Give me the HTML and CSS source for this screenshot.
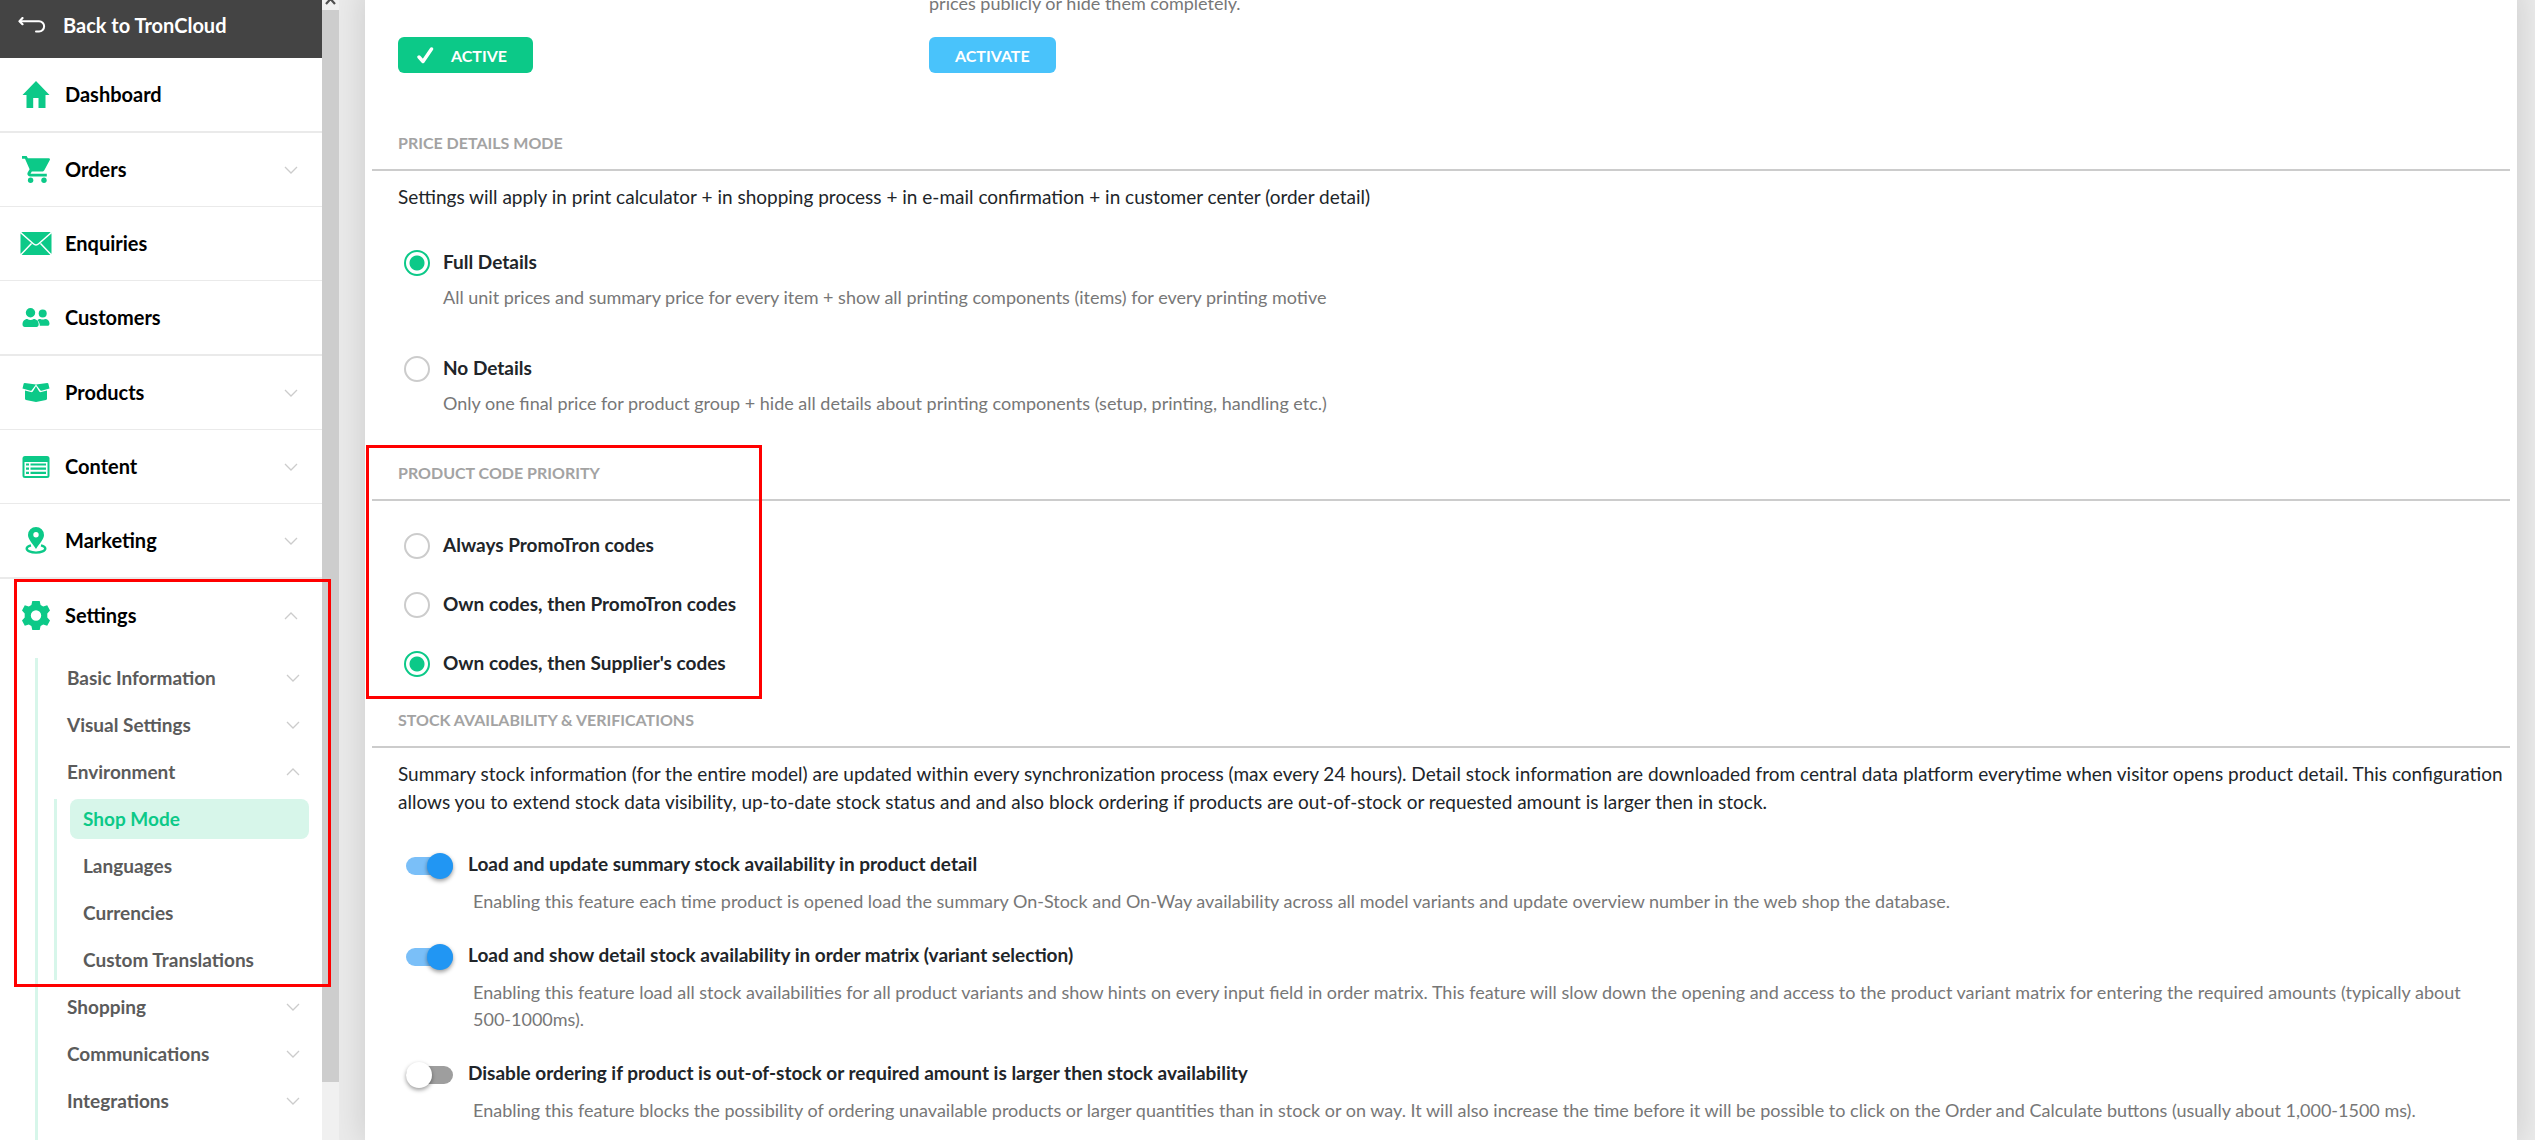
FILE: index.html
```html
<!DOCTYPE html>
<html lang="en">
<head>
<meta charset="utf-8">
<title>Shop Mode</title>
<link rel="stylesheet" href="styles.css">
</head>
<body>
<svg class="defs" aria-hidden="true">
  <symbol id="down" viewBox="0 0 14 8"><path d="M1 1l6 6 6-6" fill="none" stroke="#ccc" stroke-width="1.3"/></symbol>
  <symbol id="up" viewBox="0 0 14 8"><path d="M1 7l6-6 6 6" fill="none" stroke="#ccc" stroke-width="1.3"/></symbol>
</svg>
<div class="layout">
  <aside class="side">
    <nav class="menu">
      <a class="back" href="#">
        <svg width="28" height="16" viewBox="0 0 28 16" fill="none" stroke="#fff" stroke-width="2" stroke-linecap="round" stroke-linejoin="round"><path d="M2 4.2h19a5 5 0 0 1 0 10.300h-3"/><path d="M4.500 1L1.500 4.200l3 3" stroke-width="2.200"/></svg>
        Back to TronCloud
      </a>
      <a class="item thick" href="#"><svg class="ico" width="27" height="27" viewBox="0 0 27 27"><path d="M13.500 0L27 14h-4v13h-7V17h-5.300v10H4V14H0z"/></svg><span>Dashboard</span></a>
      <a class="item" href="#"><svg class="ico" width="28" height="27" viewBox="0 0 28 27"><path d="M0 0h4.600l1.300 2.200h20.900c1 0 1.500 1 1 1.800l-5.500 10.200c-.5.900-1.300 1.400-2.300 1.400H9.800L8.500 17.800h16.300v2.600H8c-2 0-3.200-2-2.300-3.800l1.900-3.300L3 2.800H0z"/><circle cx="8.600" cy="24.300" r="2.700"/><circle cx="22" cy="24.300" r="2.700"/></svg><span>Orders</span><svg class="chev"><use href="#down"/></svg></a>
      <a class="item" href="#"><svg class="ico" width="31" height="23" viewBox="0 0 31 23"><rect width="31" height="23" rx="2"/><path d="M0 .5l12.800 11.300q2.700 2.400 5.400 0L31 .5M0 23l11-11.500M31 23L20 11.500" fill="none" stroke="#fff" stroke-width="1.500"/></svg><span>Enquiries</span></a>
      <a class="item thick" href="#"><svg class="ico" width="27" height="19" viewBox="0 0 27 19"><circle cx="8" cy="4.700" r="4.700"/><circle cx="20.200" cy="5.500" r="4"/><path d="M0 16.500c0-3.200 2-5.500 4.800-5.500 1 .6 2 .9 3.200.9s2.200-.3 3.200-.9c2.800 0 5 2.300 5 5.500 0 1.500-1 2.500-2.200 2.500H2.200C1 19 0 18 0 16.500z"/><path d="M14.800 12.300c.8-.9 1.800-1.300 3-1.300 1.600.7 3.200.7 4.800 0 2.500 0 4.400 2 4.400 4.500 0 1.500-.9 2.300-2 2.300h-7.700c.2-2.200-.8-4.200-2.500-5.500z"/></svg><span>Customers</span></a>
      <a class="item" href="#"><svg class="ico" width="27" height="19" viewBox="0 0 27 19"><path d="M2.200 0l11.300 1.400L24.800 0c.5 0 .8.200 1 .6l1.200 4.900-8 2.300c-.4.100-.8 0-1-.4L13.500 1.600 9 7.400c-.2.400-.6.500-1 .4L0 5.500 1.200.6c.2-.4.500-.6 1-.6z"/><path d="M2.500 7.400l5.800 1.700c.8.200 1.500 0 2-.7l3.200-5.200 3.200 5.200c.5.700 1.200.9 2 .7l5.800-1.700v8.400c0 .6-.4 1-1 1.200L13.500 19 3.500 17c-.6-.2-1-.6-1-1.200z"/></svg><span>Products</span><svg class="chev"><use href="#down"/></svg></a>
      <a class="item" href="#"><svg class="ico" width="27" height="22" viewBox="0 0 27 22"><rect width="27" height="22" rx="2.500"/><path d="M2 6h23v14H2z" fill="#fff"/><path d="M3.500 8.500h3M3.500 12.700h3M3.500 16.900h3M8 8.500h15.500M8 12.700h15.500M8 16.900h15.500" stroke="#0cc988" stroke-width="2.200"/></svg><span>Content</span><svg class="chev"><use href="#down"/></svg></a>
      <a class="item thick" href="#"><svg class="ico" width="21" height="27" viewBox="0 0 21 27"><path fill-rule="evenodd" d="M10.500 0a8 8 0 0 1 8 8c0 4-4 8-8 14-4-6-8-10-8-14a8 8 0 0 1 8-8zm0 5a2.700 2.700 0 1 0 0 5.400 2.700 2.700 0 0 0 0-5.400z"/><path d="M5.500 18.300c-2.500.6-4.300 1.700-4.300 3.200 0 2.400 4 4.100 9.300 4.100s9.300-1.700 9.300-4.100c0-1.500-1.800-2.600-4.300-3.200" fill="none" stroke="#0cc988" stroke-width="2.400"/></svg><span>Marketing</span><svg class="chev"><use href="#down"/></svg></a>
      <a class="item last" href="#"><svg class="ico" width="28" height="29" viewBox="0 0 28 29"><path fill-rule="evenodd" d="M10.300 0h7.400l.9 4 2.600 1.500 4-1.300 2.800 5.200-2.700 3v4.200l2.700 3-2.800 5.200-4-1.300-2.600 1.500-.9 4h-7.400l-.9-4-2.600-1.500-4 1.300L0 19.600l2.700-3v-4.200L0 9.400l2.800-5.200 4 1.300L9.400 4zM14 9.300a5.200 5.200 0 1 0 0 10.400 5.200 5.200 0 0 0 0-10.400z"/></svg><span>Settings</span><svg class="chev"><use href="#up"/></svg></a>
      <div class="sub">
        <a class="subitem" href="#"><span>Basic Information</span><svg class="chev"><use href="#down"/></svg></a>
        <a class="subitem" href="#"><span>Visual Settings</span><svg class="chev"><use href="#down"/></svg></a>
        <a class="subitem" href="#"><span>Environment</span><svg class="chev"><use href="#up"/></svg></a>
        <div class="nested">
          <a class="leaf active" href="#">Shop Mode</a>
          <a class="leaf" href="#">Languages</a>
          <a class="leaf" href="#">Currencies</a>
          <a class="leaf" href="#">Custom Translations</a>
        </div>
        <a class="subitem" href="#"><span>Shopping</span><svg class="chev"><use href="#down"/></svg></a>
        <a class="subitem" href="#"><span>Communications</span><svg class="chev"><use href="#down"/></svg></a>
        <a class="subitem" href="#"><span>Integrations</span><svg class="chev"><use href="#down"/></svg></a>
      </div>
    </nav>
    <div class="scroll">
      <svg width="17" height="10" viewBox="0 0 17 10"><path d="M4 4l4.500-5L13 4" fill="none" stroke="#505050" stroke-width="2.200"/></svg>
      <div class="thumb"></div>
    </div>
    <div class="mark mark-menu"></div>
  </aside>

  <main class="page">
    <div class="card">
      <div class="modes">
        <div class="mode">
          <button class="btn green" type="button"><svg width="17" height="17" viewBox="0 0 17 17"><path d="M2 10l4 4.500L14.500 2" fill="none" stroke="#fff" stroke-width="3.400" stroke-linecap="round" stroke-linejoin="round"/></svg>ACTIVE</button>
        </div>
        <div class="mode">
          <p class="desc">prices publicly or hide them completely.</p>
          <button class="btn blue" type="button">ACTIVATE</button>
        </div>
      </div>

      <section class="details">
        <h2>PRICE DETAILS MODE</h2>
        <p class="lead">Settings will apply in print calculator + in shopping process + in e-mail confirmation + in customer center (order detail)</p>
        <div class="options wide">
          <div class="option"><input type="radio" name="details" id="d1" checked><div><label for="d1">Full Details</label><p class="desc">All unit prices and summary price for every item + show all printing components (items) for every printing motive</p></div></div>
          <div class="option"><input type="radio" name="details" id="d2"><div><label for="d2">No Details</label><p class="desc">Only one final price for product group + hide all details about printing components (setup, printing, handling etc.)</p></div></div>
        </div>
      </section>

      <section class="codes">
        <div class="mark mark-codes"></div>
        <h2>PRODUCT CODE PRIORITY</h2>
        <div class="options">
          <div class="option"><input type="radio" name="code" id="c1"><label for="c1">Always PromoTron codes</label></div>
          <div class="option"><input type="radio" name="code" id="c2"><label for="c2">Own codes, then PromoTron codes</label></div>
          <div class="option"><input type="radio" name="code" id="c3" checked><label for="c3">Own codes, then Supplier's codes</label></div>
        </div>
      </section>

      <section class="stock">
        <h2>STOCK AVAILABILITY &amp; VERIFICATIONS</h2>
        <p class="lead">Summary stock information (for the entire model) are updated within every synchronization process (max every 24 hours). Detail stock information are downloaded from central data platform everytime when visitor opens product detail. This configuration allows you to extend stock data visibility, up-to-date stock status and and also block ordering if products are out-of-stock or requested amount is larger then in stock.</p>
        <div class="toggles">
          <div class="toggle"><input type="checkbox" id="t1" checked><div><label for="t1">Load and update summary stock availability in product detail</label><p class="desc">Enabling this feature each time product is opened load the summary On-Stock and On-Way availability across all model variants and update overview number in the web shop the database.</p></div></div>
          <div class="toggle"><input type="checkbox" id="t2" checked><div><label for="t2">Load and show detail stock availability in order matrix (variant selection)</label><p class="desc">Enabling this feature load all stock availabilities for all product variants and show hints on every input field in order matrix. This feature will slow down the opening and access to the product variant matrix for entering the required amounts (typically about 500-1000ms).</p></div></div>
          <div class="toggle"><input type="checkbox" id="t3"><div><label for="t3">Disable ordering if product is out-of-stock or required amount is larger then stock availability</label><p class="desc">Enabling this feature blocks the possibility of ordering unavailable products or larger quantities than in stock or on way. It will also increase the time before it will be possible to click on the Order and Calculate buttons (usually about 1,000-1500 ms).</p></div></div>
        </div>
      </section>
    </div>
  </main>
</div>
</body>
</html>
```
FILE: styles.css
```css
* { box-sizing: border-box; }
body { margin: 0; font-family: Lato, "Open Sans", sans-serif; color: #212529; background: #eaeaea; }
p, h2 { margin: 0; }
a { text-decoration: none; }
svg { flex: none; display: block; }
.defs { position: absolute; width: 0; height: 0; }

.layout { display: flex; height: 100vh; overflow: hidden; }

/* Sidebar */
.side { position: relative; display: flex; flex: none; height: 100%; overflow: hidden; }
.menu { display: flex; flex-direction: column; width: 322px; background: #fff; overflow: hidden; font-weight: 700; }
.back { display: flex; flex: none; align-items: center; gap: 17px; height: 58px; padding: 0 18px 8px; background: #444; color: #fff; font-size: 20px; }
.item { display: flex; flex: none; align-items: center; height: 74px; padding: 0 24px 0 20px; border-bottom: 1px solid #eaeaea; color: #000; font-size: 20px; }
.item.thick { height: 75px; border-bottom-width: 2px; }
.item.last { height: 73px; border-bottom: 0; }
.item span { flex: 1; padding: 0 0 2px 13px; }
.ico { width: 32px; fill: #0cc988; }
.chev { width: 14px; height: 8px; }
.sub { display: flex; flex: 1 0 auto; flex-direction: column; gap: 7px; margin: 6px 0 0 35px; border-left: 3px solid #d7f6ea; font-size: 19px; }
.subitem, .leaf { display: flex; align-items: center; height: 40px; color: #5b5b5b; }
.subitem { padding: 0 22px 0 29px; }
.subitem span { flex: 1; padding-bottom: 2px; }
.nested { display: flex; flex-direction: column; gap: 7px; margin: 0 13px 0 16px; padding-left: 13px; border-left: 3px solid #d7f6ea; }
.leaf { padding: 0 0 2px 13px; border-radius: 8px; }
.leaf.active { background: #d7f6ea; color: #0cc988; }
.scroll { display: flex; flex-direction: column; width: 17px; background: #f0f0f0; }
.thumb { height: 94%; background: #cdcdcd; }

/* Highlight frames drawn over the page */
.mark { position: absolute; border: 3px solid #f00; pointer-events: none; }
.mark-menu { top: 579px; left: 14px; width: 317px; height: 408px; }
.mark-codes { top: -16px; left: -6px; width: 396px; height: 254px; }

/* Content */
.page { flex: 1; min-width: 0; padding: 0 18px 0 26px; }
.card { min-height: 100%; padding: 0 7px 16px; background: #fff; box-shadow: 0 0 30px rgba(0, 0, 0, .14); }
.modes { display: grid; grid-template-columns: repeat(4, 1fr); column-gap: 12px; align-items: end; margin-top: -10px; padding-left: 26px; }
.mode .desc { margin-bottom: 20px; }
.btn { display: flex; align-items: center; justify-content: center; height: 36px; padding: 0 26px; border: 0; border-radius: 6px; color: #fff; font: 700 16px Lato, sans-serif; }
.btn svg { margin-right: 17px; }
.green { padding-left: 19px; background: #0cc988; }
.blue { background: #49c3fb; }
section { position: relative; }
h2 { padding: 0 26px 14px; border-bottom: 2px solid #ccc; color: #a3a3a3; font-size: 16px; line-height: 24px; }
.lead { padding: 12px 0 0 26px; font-size: 19px; line-height: 28px; }
label { display: block; font-size: 19px; font-weight: 700; line-height: 27px; }
.desc { color: #777; font-size: 18px; line-height: 27px; }
.details { margin-top: 58px; }
.codes { margin-top: 44px; }
.stock { margin-top: 32px; }
.options { display: grid; gap: 32px; padding: 30px 0 0 32px; }
.options.wide { gap: 43px; padding-top: 37px; }
.options .desc { margin-top: 9px; }
.option { display: flex; gap: 13px; }
input { flex: none; appearance: none; margin: 2px 0 0; }
.option input { width: 26px; height: 26px; margin-bottom: -1px; border: 2px solid #ccc; border-radius: 50%; }
.option input:checked { border-color: #0cc988; background: radial-gradient(circle, #0cc988 7px, #fff 8px); }
.toggles { display: grid; gap: 26px; padding: 34px 26px 0 34px; }
.toggle { display: flex; gap: 15px; }
.toggle .desc { margin: 11px 0 0 5px; }
.toggle input { display: flex; align-items: center; width: 47px; height: 18px; margin-top: 7px; border-radius: 9px; background: #9e9e9e; }
.toggle input::before { content: ""; width: 26px; height: 26px; border-radius: 50%; background: #fff; box-shadow: 0 2px 4px rgba(0, 0, 0, .4); }
.toggle input:checked { justify-content: flex-end; background: #7abff8; }
.toggle input:checked::before { background: #2196f3; }
```
